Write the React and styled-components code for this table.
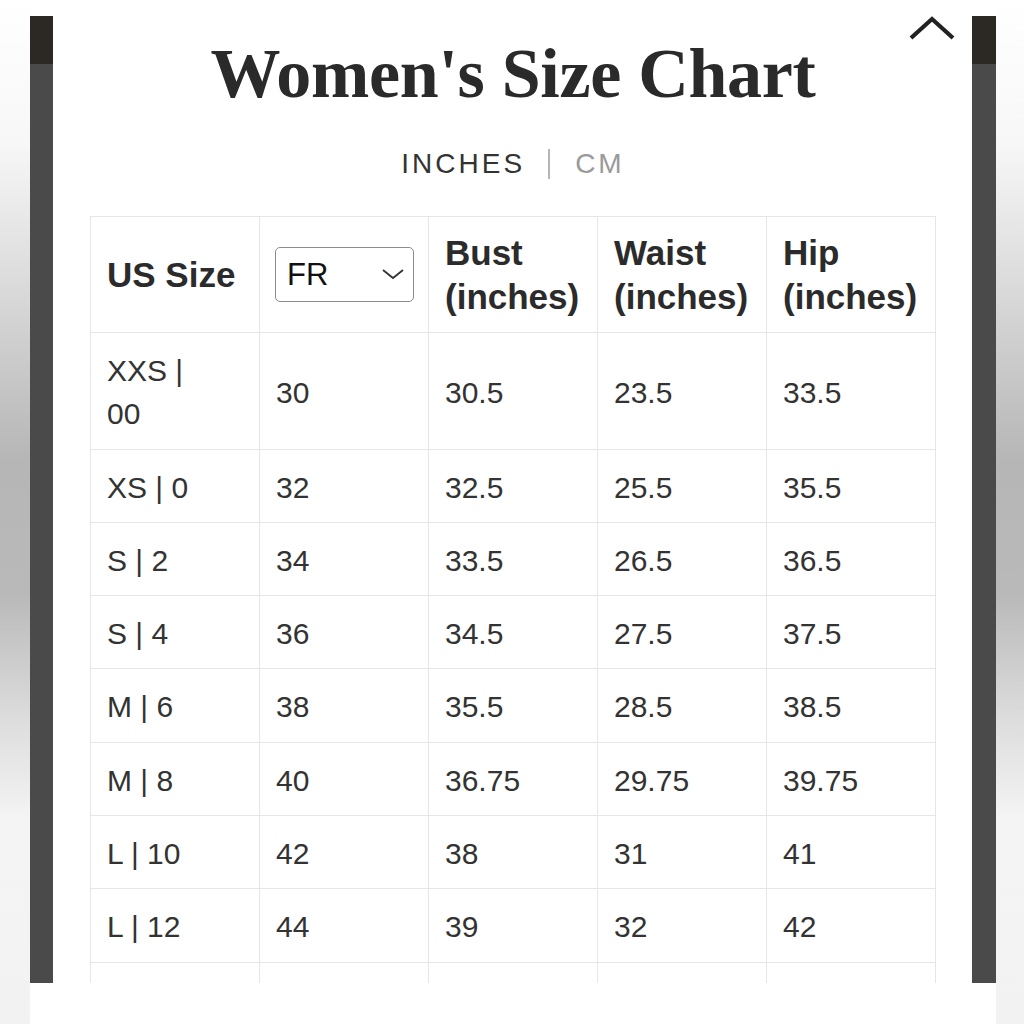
import React from "react";
import styled, { createGlobalStyle } from "styled-components";

const GlobalStyle = createGlobalStyle`
  html, body {
    margin: 0;
    padding: 0;
    background: #ffffff;
  }
`;

const rows = [
  ["XXS | 00", "30", "30.5", "23.5", "33.5"],
  ["XS | 0", "32", "32.5", "25.5", "35.5"],
  ["S | 2", "34", "33.5", "26.5", "36.5"],
  ["S | 4", "36", "34.5", "27.5", "37.5"],
  ["M | 6", "38", "35.5", "28.5", "38.5"],
  ["M | 8", "40", "36.75", "29.75", "39.75"],
  ["L | 10", "42", "38", "31", "41"],
  ["L | 12", "44", "39", "32", "42"],
];

const Page = styled.div`
  width: 1024px;
  height: 1024px;
  display: flex;
  overflow: hidden;
`;

const Gutter = styled.div`
  width: ${({ $w }) => $w}px;
  flex-shrink: 0;
  background: linear-gradient(
    to bottom,
    #ffffff 0%,
    #f7f7f7 14%,
    #d6d6d6 30%,
    #b6b6b6 45%,
    #b9b9b9 58%,
    #dcdcdc 70%,
    #f4f4f4 80%,
    #f2f2f2 100%
  );
`;

const Screen = styled.div`
  width: 966px;
  display: flex;
  flex-direction: column;
  background: #ffffff;
`;

const Viewport = styled.div`
  height: 983px;
  display: flex;
  overflow: hidden;
`;

const SideBar = styled.div`
  width: ${({ $w }) => $w}px;
  flex-shrink: 0;
  margin-top: 16px;
  background: linear-gradient(to bottom, #2c2824 0 48px, #4a4a4a 48px);
`;

const Sheet = styled.div`
  flex: 1;
  padding: 0 36px 0 37px;
  overflow: hidden;
  background: #ffffff;
`;

const Header = styled.div`
  position: relative;
  padding-top: 39px;
  text-align: center;
`;

const Title = styled.h1`
  margin: 0;
  font-family: "Liberation Serif", "Times New Roman", serif;
  font-weight: 700;
  font-size: 70px;
  line-height: 70px;
  color: #2a2a2a;
  letter-spacing: -0.3px;
`;

const CollapseButton = styled.button`
  position: absolute;
  top: 14px;
  right: -22px;
  width: 52px;
  height: 28px;
  padding: 0;
  border: none;
  background: transparent;
  cursor: pointer;
`;

const UnitToggle = styled.div`
  margin-top: 41px;
  display: flex;
  justify-content: center;
  align-items: center;
  height: 28px;
`;

const Unit = styled.span`
  font-family: "Liberation Sans", Arial, sans-serif;
  font-size: 28px;
  line-height: 28px;
  letter-spacing: 3px;
  color: ${({ $active }) => ($active ? "#333333" : "#9a9a9a")};
`;

const Divider = styled.span`
  width: 2px;
  height: 30px;
  margin: 0 25px 0 23px;
  background: #b5b5b5;
`;

const Table = styled.table`
  margin-top: 38px;
  width: 100%;
  border-collapse: collapse;
  table-layout: fixed;
  font-family: "Liberation Sans", Arial, sans-serif;
  color: #303030;
`;

const Th = styled.th`
  border: 1px solid #e6e6e6;
  padding: 14px 16px;
  font-size: 35px;
  line-height: 43.5px;
  font-weight: 700;
  text-align: left;
  vertical-align: middle;
  color: #2b2b2b;
`;

const Td = styled.td`
  border: 1px solid #e6e6e6;
  padding: 16px ${({ $label }) => ($label ? 44 : 16)}px 13px 16px;
  font-size: 30px;
  line-height: 43.3px;
  vertical-align: middle;
  color: #333333;
`;

const SelectWrap = styled.div`
  position: relative;
  width: 139px;
  height: 55px;
  margin-left: -1px;
`;

const Select = styled.select`
  appearance: none;
  width: 100%;
  height: 100%;
  box-sizing: border-box;
  border: 1px solid #8c8c8c;
  border-radius: 5px;
  background: #ffffff;
  padding: 0 0 0 11px;
  font-family: "Liberation Sans", Arial, sans-serif;
  font-size: 31px;
  color: #111111;
`;

const SelectArrow = styled.svg`
  position: absolute;
  right: 9px;
  top: 21px;
  pointer-events: none;
`;

export default function App() {
  return (
    <>
      <GlobalStyle />
      <Page>
        <Gutter $w={30} />
        <Screen>
          <Viewport>
            <SideBar $w={23} />
            <Sheet>
              <Header>
                <Title>Women's Size Chart</Title>
                <CollapseButton aria-label="Collapse">
                  <svg width="52" height="28" viewBox="0 0 52 28">
                    <path
                      d="M5 24 L26 5 L47 24"
                      fill="none"
                      stroke="#222"
                      strokeWidth="4.2"
                    />
                  </svg>
                </CollapseButton>
              </Header>
              <UnitToggle>
                <Unit $active>INCHES</Unit>
                <Divider />
                <Unit>CM</Unit>
              </UnitToggle>
              <Table>
                <thead>
                  <tr>
                    <Th>US Size</Th>
                    <Th>
                      <SelectWrap>
                        <Select defaultValue="FR">
                          <option value="FR">FR</option>
                          <option value="UK">UK</option>
                          <option value="IT">IT</option>
                        </Select>
                        <SelectArrow width="24" height="12" viewBox="0 0 24 12">
                          <path
                            d="M2 2 L12 10 L22 2"
                            fill="none"
                            stroke="#333"
                            strokeWidth="1.8"
                          />
                        </SelectArrow>
                      </SelectWrap>
                    </Th>
                    <Th>Bust (inches)</Th>
                    <Th>Waist (inches)</Th>
                    <Th>Hip (inches)</Th>
                  </tr>
                </thead>
                <tbody>
                  {rows.map((r) => (
                    <tr key={r[0]}>
                      {r.map((v, i) => (
                        <Td key={i} $label={i === 0}>
                          {v}
                        </Td>
                      ))}
                    </tr>
                  ))}
                  <tr>
                    {[0, 1, 2, 3, 4].map((i) => (
                      <Td key={i}>&nbsp;</Td>
                    ))}
                  </tr>
                </tbody>
              </Table>
            </Sheet>
            <SideBar $w={24} />
          </Viewport>
        </Screen>
        <Gutter $w={28} />
      </Page>
    </>
  );
}
